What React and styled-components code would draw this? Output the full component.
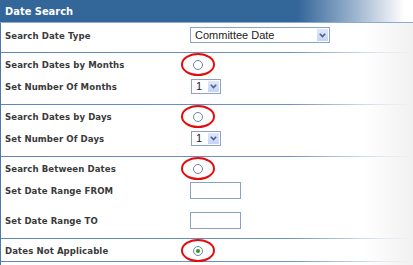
import React from "react";
import styled, { createGlobalStyle } from "styled-components";

const Global = createGlobalStyle`
  html, body { margin: 0; padding: 0; background: #fff; }
  body { width: 413px; height: 265px; overflow: hidden; }
`;

const Panel = styled.div`
  width: 413px;
  height: 265px;
  box-sizing: border-box;
  border-left: 1px solid #4f78aa;
  background: linear-gradient(to right, #fff 0%, #fff 88%, #f1f1f1 100%);
  font-family: "DejaVu Sans Condensed", "DejaVu Sans", sans-serif;
  display: flex;
  flex-direction: column;
`;

const Header = styled.div`
  height: 23px;
  box-sizing: border-box;
  padding-left: 5px;
  display: flex;
  align-items: center;
  color: #fff;
  font-weight: bold;
  font-size: 11px;
  background: linear-gradient(to right, #336699 0%, #336699 72%, #9db4cf 86%, #ffffff 98%);
  border-bottom: 1px solid #8eaad0;
  margin-left: -1px;
`;

const Section = styled.div`
  padding-bottom: ${(p) => p.$pb ?? 7}px;
  border-bottom: 1px solid transparent;
  border-image: linear-gradient(to right, #5f87b8 0%, #6f93c0 70%, #d8e2ee 90%, rgba(255,255,255,0) 100%) 1;
`;

const Row = styled.div`
  display: grid;
  grid-template-columns: 184px 1fr;
  align-items: center;
  height: 22px;
  margin-top: ${(p) => p.$mt ?? 0}px;
  margin-bottom: ${(p) => p.$mb ?? 0}px;
`;

const Label = styled.div`
  padding-left: 4px;
  color: #3a3a3a;
  font-weight: bold;
  font-size: 9.5px;
  letter-spacing: 0.1px;
  white-space: nowrap;
`;

const Control = styled.div`
  display: flex;
  align-items: center;
  padding-left: ${(p) => p.$pl ?? 5}px;
`;

const SelectBox = styled.div`
  width: ${(p) => p.$w}px;
  height: ${(p) => p.$h}px;
  box-sizing: border-box;
  border: 1px solid #8aa3c2;
  background: #fff;
  display: flex;
  align-items: center;
  justify-content: space-between;
  font-family: "Liberation Sans", Arial, sans-serif;
  font-size: 11px;
  color: #222;
  padding-left: 4px;
`;

const ArrowBtn = styled.div`
  width: 13px;
  height: 100%;
  box-sizing: border-box;
  border: 1px solid #fff;
  background: linear-gradient(#dfe8fb, #c5d4f5);
  display: flex;
  align-items: center;
  justify-content: center;
`;

const Chevron = () => (
  <svg width="7" height="5" viewBox="0 0 7 5">
    <path d="M0.8 0.8 L3.5 3.6 L6.2 0.8" fill="none" stroke="#4d6185" strokeWidth="1.6" />
  </svg>
);

const Select = ({ w, h, value }) => (
  <SelectBox $w={w} $h={h}>
    <span>{value}</span>
    <ArrowBtn>
      <Chevron />
    </ArrowBtn>
  </SelectBox>
);

const TextInput = styled.div`
  width: 51px;
  height: 17px;
  box-sizing: border-box;
  border: 1px solid #8aa3c2;
  background: #fff;
`;

const Ring = styled.span`
  width: 34px;
  height: 23px;
  box-sizing: border-box;
  border: 2.5px solid #e30d0d;
  border-radius: 50%;
  display: flex;
  align-items: center;
  justify-content: center;
  margin-left: -9px;
`;

const Radio = styled.span`
  width: 10px;
  height: 10px;
  box-sizing: border-box;
  border: 1px solid #6b85a8;
  border-radius: 50%;
  background: #fff;
  display: flex;
  align-items: center;
  justify-content: center;
  &::after {
    content: "";
    display: ${(p) => (p.$on ? "block" : "none")};
    width: 4px;
    height: 4px;
    border-radius: 50%;
    background: #22a322;
  }
`;

const RadioRow = ({ label, on }) => (
  <Row>
    <Label>{label}</Label>
    <Control>
      <Ring>
        <Radio $on={on} />
      </Ring>
    </Control>
  </Row>
);

export default function App() {
  return (
    <>
      <Global />
      <Panel>
        <Header>Date Search</Header>
        <Section $pb={6}>
          <Row $mt={1}>
            <Label>Search Date Type</Label>
            <Control $pl={5}>
              <Select w={140} h={16} value="Committee Date" />
            </Control>
          </Row>
        </Section>
        <Section>
          <RadioRow label="Search Dates by Months" />
          <Row>
            <Label>Set Number Of Months</Label>
            <Control $pl={6}>
              <Select w={30} h={15} value="1" />
            </Control>
          </Row>
        </Section>
        <Section>
          <RadioRow label="Search Dates by Days" />
          <Row>
            <Label>Set Number Of Days</Label>
            <Control $pl={6}>
              <Select w={30} h={15} value="1" />
            </Control>
          </Row>
        </Section>
        <Section>
          <RadioRow label="Search Between Dates" />
          <Row $mb={8}>
            <Label>Set Date Range FROM</Label>
            <Control>
              <TextInput />
            </Control>
          </Row>
          <Row>
            <Label>Set Date Range TO</Label>
            <Control>
              <TextInput />
            </Control>
          </Row>
        </Section>
        <Section $pb={0}>
          <RadioRow label="Dates Not Applicable" on />
        </Section>
      </Panel>
    </>
  );
}
